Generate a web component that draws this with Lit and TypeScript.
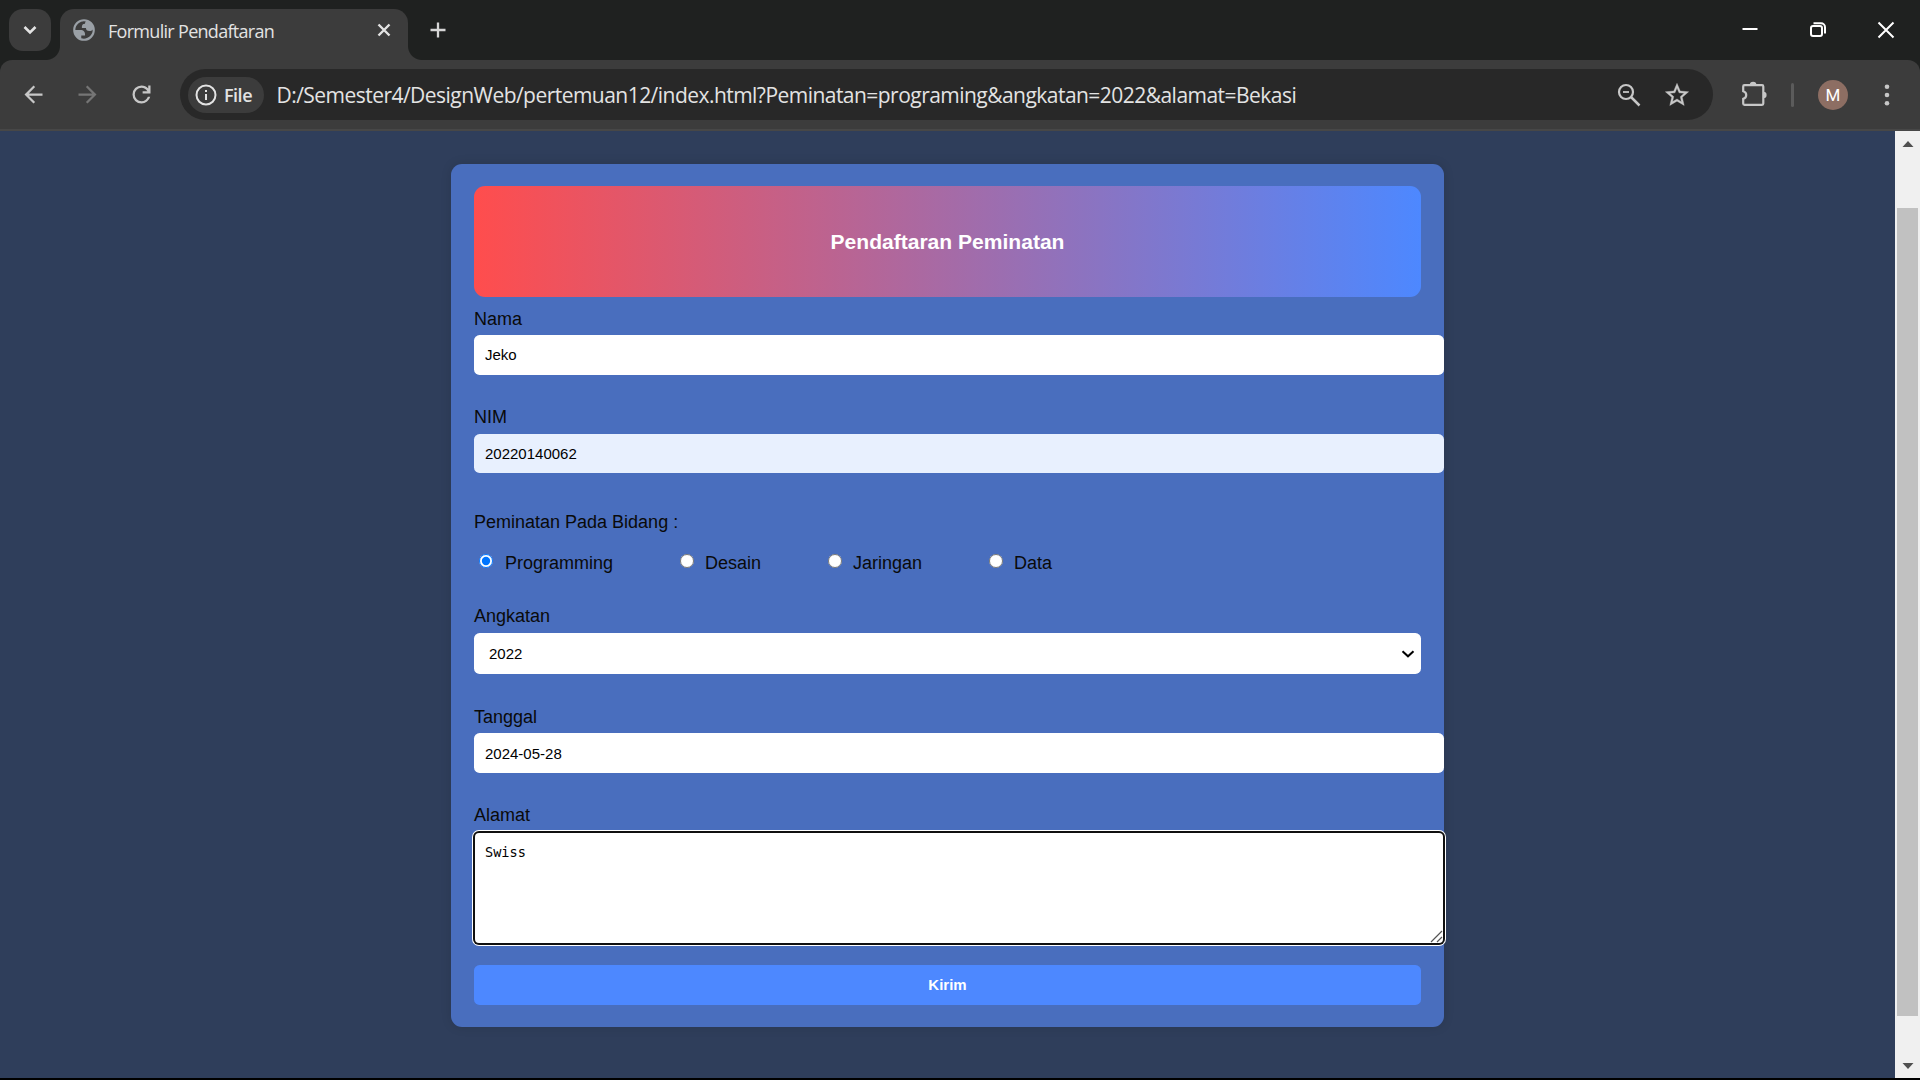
import { LitElement, html, css, svg } from "lit";
import { customElement } from "lit/decorators.js";

@customElement("browser-chrome")
export class BrowserChrome extends LitElement {
  static styles = css`
    :host { display: block; height: 131px; background: #1f2120; font-family: "Open Sans", "Noto Sans", sans-serif; }
    svg { display: block; flex: none; }
    .strip { display: flex; height: 60px; box-sizing: border-box; padding-top: 9px; padding-left: 9px; }
    .search { width: 42px; height: 42px; border-radius: 14px; background: #3c3c3c; display: grid; place-items: center; margin-right: -5px; }
    .flare { width: 14px; height: 14px; align-self: flex-end; }
    .left { background: radial-gradient(circle at 0 0, transparent 13.5px, #3c3c3c 14.5px); }
    .right { background: radial-gradient(circle at 100% 0, transparent 13.5px, #3c3c3c 14.5px); }
    .tab { width: 348px; height: 51px; box-sizing: border-box; padding: 0 15px 9px 11px; border-radius: 14px 14px 0 0; background: #3c3c3c; display: flex; align-items: center; }
    .title { flex: 1; margin-left: 11px; font-size: 18px; line-height: 24px; padding-top: 2px; color: #e3e3e3; white-space: nowrap; letter-spacing: -0.7px; }
    .plus { margin: 8px 0 0 3px; }
    .controls { display: flex; margin-left: auto; padding-top: 8px; }
    .controls svg { margin-right: 42px; }
    .controls svg:last-child { margin-right: 21.500px; }
    .toolbar { height: 71px; box-sizing: border-box; border-bottom: 2px solid #474747; border-radius: 12px 12px 0 0; background: #3c3c3c; display: flex; align-items: center; padding-left: 19.500px; }
    .nav { margin-right: 27px; }
    .omni { width: 1533px; height: 51px; box-sizing: border-box; border-radius: 26px; background: #282828; display: flex; align-items: center; padding: 0 22px 0 8px; margin-left: -1.500px; }
    .chip { width: 76px; height: 36px; box-sizing: border-box; border-radius: 18px; background: #3c3c3c; display: flex; align-items: center; padding-left: 5.500px; gap: 6.500px; font-size: 18px; font-weight: 600; color: #e3e3e3; letter-spacing: -0.5px; }
    .url { flex: 1; margin-left: 12.500px; font-size: 21px; line-height: 30px; white-space: nowrap; color: #e3e3e3; letter-spacing: -0.535px; }
    .star { margin-left: 20px; }
    .puzzle { margin-left: 26.500px; }
    .sep { width: 3px; height: 24px; border-radius: 2px; background: #5b5b5b; margin-left: 23.500px; }
    .avatar { width: 30px; height: 30px; border-radius: 50%; background: #8d6e63; color: #fff; display: grid; place-items: center; font: 17px Roboto, sans-serif; margin-left: 24px; }
    .dots { margin-left: 26px; }
  `;

  render() {
    return html`
      <div class="strip">
        <div class="search">
          <svg width="14" height="10" viewBox="0 0 14 10" fill="none" stroke="#e3e3e3" stroke-width="2.6"><path d="M1.5 2 7 7.5 12.5 2" /></svg>
        </div>
        <span class="flare left"></span>
        <div class="tab">
          <svg width="26" height="26" viewBox="0 0 24 24" fill="#9aa0a6" fill-rule="evenodd"><path d="M12 2a10 10 0 1 0 0 20 10 10 0 0 0 0-20zM4 12h4.400c3.407.022 4.922 1.730 4.543 5.127H9.488v2.470a8.004 8.004 0 0 0 10.498-8.083C19.327 12.504 18.332 13 17 13c-2.137 0-3.206-.916-3.206-2.750h-3.748c-.274-2.728.683-4.092 2.870-4.092 0-.975.327-1.597.811-1.970A8 8 0 0 0 4 12z" /></svg>
          <span class="title">Formulir Pendaftaran</span>
          <svg width="18" height="18" viewBox="0 0 18 18" stroke="#e3e3e3" stroke-width="2.4"><path d="M3.500 3.500l11 11M14.500 3.500l-11 11" /></svg>
        </div>
        <span class="flare right"></span>
        <svg class="plus" width="26" height="26" viewBox="0 0 26 26" stroke="#d6d6d6" stroke-width="2.300"><path d="M13 5.500v15M5.500 13h15" /></svg>
        <div class="controls">
          <svg width="26" height="26" viewBox="0 0 26 26" stroke="#fff" stroke-width="2"><path d="M5.500 12h15" /></svg>
          <svg width="26" height="26" viewBox="0 0 26 26" fill="none" stroke="#fff" stroke-width="2"><rect x="6" y="9" width="11" height="10" rx="2" /><path d="M8.500 6.200h7.500a4 4 0 0 1 4 4v6.300" /></svg>
          <svg width="26" height="26" viewBox="0 0 26 26" stroke="#fff" stroke-width="2"><path d="M5.500 5.500l15 15M20.500 5.500l-15 15" /></svg>
        </div>
      </div>
      <div class="toolbar">
        <svg class="nav" width="27" height="27" viewBox="0 0 24 24" fill="#c7c7c7"><path d="M20 11H7.830l5.590-5.590L12 4l-8 8 8 8 1.410-1.410L7.830 13H20v-2z" /></svg>
        <svg class="nav" width="27" height="27" viewBox="0 0 24 24" fill="#757575"><path d="M12 4l-1.410 1.410L16.170 11H4v2h12.170l-5.580 5.590L12 20l8-8z" /></svg>
        <svg class="nav" width="27" height="27" viewBox="0 0 24 24" fill="#c7c7c7"><path d="M12 20q-3.350 0-5.675-2.325T4 12t2.325-5.675T12 4q1.725 0 3.300.712T18 6.750V4h2v7h-7V9h4.200q-.8-1.400-2.187-2.200T12 6Q9.500 6 7.750 7.750T6 12t1.750 4.250T12 18q1.925 0 3.475-1.100T17.650 14h2.100q-.7 2.650-2.850 4.325T12 20" /></svg>
        <div class="omni">
          <div class="chip">
            <svg width="24" height="24" viewBox="0 0 24 24" fill="none" stroke="#e3e3e3" stroke-width="2"><circle cx="12" cy="12" r="9.500" /><path d="M12 11v6M12 7v2" /></svg>
            <span>File</span>
          </div>
          <span class="url">D:/Semester4/DesignWeb/pertemuan12/index.html?Peminatan=programing&amp;angkatan=2022&amp;alamat=Bekasi</span>
          <svg width="28" height="28" viewBox="0 0 28 28" fill="none" stroke="#c7c7c7" stroke-width="2.200"><circle cx="11" cy="11" r="7" /><path d="M16 16l8.500 8.500" stroke-width="2.500" /><path d="M8 11h6" stroke-width="1.800" /></svg>
          <svg class="star" width="28" height="28" viewBox="0 0 24 24" fill="#c7c7c7" stroke="#c7c7c7" stroke-width="0.300"><path d="M22 9.240l-7.190-.62L12 2 9.190 8.630 2 9.240l5.460 4.730L5.820 21 12 17.270 18.180 21l-1.630-7.030L22 9.240zM12 15.400l-3.760 2.270 1-4.280-3.320-2.880 4.380-.38L12 6.100l1.710 4.040 4.380.38-3.320 2.880 1 4.280L12 15.400z" /></svg>
        </div>
        <svg class="puzzle" width="28" height="28" viewBox="0 0 28 28"><path d="M3.200 5.500q0-1.300 1.300-1.300H22q1.300 0 1.300 1.300v5.400v11.600q0 1.300-1.300 1.300H4.500q-1.300 0-1.300-1.300v-4.700a3.900 3.900 0 0 0 0-7.600z" fill="none" stroke="#c7c7c7" stroke-width="2.200" /><path d="M9.800 4a3.300 3.300 0 0 1 6.600 0zM23.300 10.700a3.300 3.300 0 0 1 0 6.600z" fill="#c7c7c7" /></svg>
        <span class="sep"></span>
        <span class="avatar">M</span>
        <svg class="dots" width="26" height="26" viewBox="0 0 26 26" fill="#c7c7c7"><circle cx="13" cy="4.700" r="2.300" /><circle cx="13" cy="13" r="2.300" /><circle cx="13" cy="21.300" r="2.300" /></svg>
      </div>
    `;
  }
}

const FIELDS = [
  { label: "Programming", checked: true, cls: "r1" },
  { label: "Desain", checked: false, cls: "r2" },
  { label: "Jaringan", checked: false, cls: "r3" },
  { label: "Data", checked: false, cls: "r4" },
];

@customElement("registration-form")
export class RegistrationForm extends LitElement {
  static styles = css`
    :host { display: block; width: 993px; height: 863px; box-sizing: border-box; padding: 22px 0 22px 23px; border-radius: 11px; background: #496ebe; box-shadow: 0 0 11px rgba(0, 0, 0, 0.12); font: 18px/20px "Liberation Sans", Arial, sans-serif; color: #0a0a0a; }
    .banner { width: 947px; height: 111px; border-radius: 11px; background: linear-gradient(to right, #ff4d4d, #4d88ff); color: #fff; font-size: 21.060px; line-height: 111px; margin: 0; text-align: center; }
    .label { display: block; height: 20px; margin: 32px 0 6px; }
    .first { margin-top: 12px; }
    .tall { margin: 33px 0 7px; }
    .nim { margin-bottom: 7px; }
    .tgl { margin-top: 33px; }
    .alamat { margin-bottom: 8px; }
    .input, .select, .area, .button { display: block; box-sizing: border-box; border: 0; outline: 0; margin: 0; border-radius: 5.600px; background: #fff; color: #000; font: 15px "Liberation Sans", Arial, sans-serif; }
    .input { width: 970px; height: 40px; padding: 0 11px 1px; }
    .autofill { height: 39px; padding-bottom: 0; background: #e8f0fe; }
    .date { padding-bottom: 0; }
    .heading { margin: 39px 0 21px; height: 20px; }
    .radios { display: flex; height: 20px; }
    .option { display: flex; }
    .radio { width: 14px; height: 14px; margin: 1px 11px 0 6px; }
    .r1 { width: 200px; }
    .r1 .radio { margin-left: 5px; margin-right: 12px; }
    .r2 { width: 148px; }
    .r3 { width: 161px; }
    .selectbox { display: grid; width: 947px; align-items: center; }
    .select { grid-area: 1 / 1; width: 947px; height: 41px; appearance: none; padding: 0 15px; }
    .chevron { grid-area: 1 / 1; justify-self: end; margin-right: 5.500px; pointer-events: none; }
    .areabox { display: grid; width: 968px; margin-left: 1px; }
    .area { grid-area: 1 / 1; width: 968px; height: 110px; padding: 10px; resize: none; border-radius: 4px; box-shadow: 0 0 0 2px #101010, 0 0 0 3px #fff; font: 13.600px/18px "DejaVu Sans Mono", monospace; }
    .grip { grid-area: 1 / 1; place-self: end; pointer-events: none; margin: 0; }
    .button { width: 947px; height: 40px; margin-top: 22px; padding: 0 0 2px; background: #4d88ff; color: #fff; font-weight: bold; }
  `;

  render() {
    return html`
      <h3 class="banner">Pendaftaran Peminatan</h3>
      <label class="label first">Nama</label>
      <input class="input" type="text" value="Jeko" />
      <label class="label nim">NIM</label>
      <input class="input autofill" type="text" value="20220140062" />
      <p class="heading">Peminatan Pada Bidang :</p>
      <div class="radios">
        ${FIELDS.map(
          (f) => html`<label class="option ${f.cls}"><input class="radio" type="radio" name="peminatan" ?checked=${f.checked} />${f.label}</label>`
        )}
      </div>
      <label class="label tall">Angkatan</label>
      <div class="selectbox">
        <select class="select"><option>2022</option></select>
        <svg class="chevron" width="16" height="12" viewBox="0 0 16 12" fill="none" stroke="#000" stroke-width="2"><path d="M2.500 3.200 8 8.300 13.500 3.200" /></svg>
      </div>
      <label class="label tgl">Tanggal</label>
      <input class="input date" type="text" value="2024-05-28" />
      <label class="label alamat">Alamat</label>
      <div class="areabox">
        <textarea class="area" .value=${"Swiss"}></textarea>
        <svg class="grip" width="13" height="13" viewBox="0 0 13 13" stroke="#555" stroke-width="1.200"><path d="M1 12 12 1M7 12l5-5" /></svg>
      </div>
      <button class="button">Kirim</button>
    `;
  }
}

@customElement("app-root")
export class AppRoot extends LitElement {
  static styles = css`
    :host { display: flex; flex-direction: column; width: 1920px; height: 1080px; overflow: hidden; background: #000; }
    .viewport { height: 947px; display: flex; background: #2f3e5b; }
    .page { width: 1895px; box-sizing: border-box; padding: 33px 0 0 451px; }
    .scroll { width: 25px; box-sizing: border-box; background: #f0f0f0; display: flex; flex-direction: column; align-items: center; padding: 10px 0 9px; }
    .scroll svg { display: block; flex: none; }
    .thumb { width: 21px; height: 808px; margin: 61px 0 47px; background: #c1c1c1; }
  `;

  private arrow(d: string) {
    return html`<svg width="12" height="6" viewBox="0 0 12 6" fill="#505050">${svg`<path d=${d} />`}</svg>`;
  }

  render() {
    return html`
      <browser-chrome></browser-chrome>
      <div class="viewport">
        <main class="page"><registration-form></registration-form></main>
        <div class="scroll">
          ${this.arrow("M0.500 6 6 0 11.500 6z")}
          <div class="thumb"></div>
          ${this.arrow("M0.500 0 6 6 11.500 0z")}
        </div>
      </div>
    `;
  }
}
